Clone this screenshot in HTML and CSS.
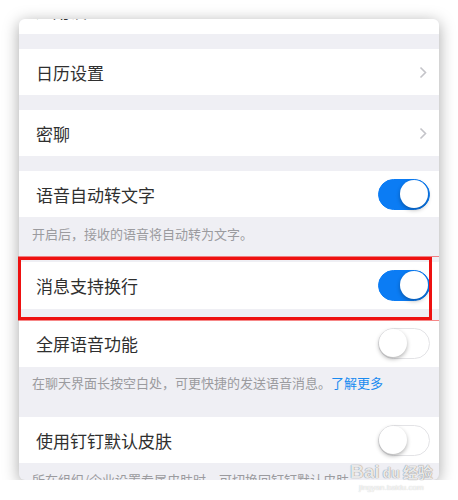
FILE: index.html
```html
<!DOCTYPE html>
<html lang="zh">
<head>
  <meta charset="UTF-8" />
  <title>设置</title>
  <link rel="stylesheet" href="styles.css">
</head>
<body>
  <div class="card">
    <div class="row row-cut"><span class="label">通用设置</span></div>
    <div class="gap"></div>

    <div class="row">
      <span class="label">日历设置</span>
      <svg class="chevron" width="8" height="13" viewBox="0 0 8 13"><polyline points="1.5,1.5 6.5,6.5 1.5,11.5" /></svg>
    </div>
    <div class="gap"></div>

    <div class="row">
      <span class="label">密聊</span>
      <svg class="chevron" width="8" height="13" viewBox="0 0 8 13"><polyline points="1.5,1.5 6.5,6.5 1.5,11.5" /></svg>
    </div>
    <div class="gap"></div>

    <div class="row">
      <span class="label">语音自动转文字</span>
      <span class="toggle on"><span class="knob"></span></span>
    </div>
    <div class="desc desc-first">开启后，接收的语音将自动转为文字。</div>

    <div class="row row-tall">
      <span class="label">消息支持换行</span>
      <span class="toggle on"><span class="knob"></span></span>
    </div>
    <div class="gap gap-small"></div>

    <div class="row row-tall">
      <span class="label">全屏语音功能</span>
      <span class="toggle"><span class="knob"></span></span>
    </div>
    <div class="desc desc-tall">在聊天界面长按空白处，可更快捷的发送语音消息。<a class="more" href="#">了解更多</a></div>

    <div class="row">
      <span class="label">使用钉钉默认皮肤</span>
      <span class="toggle"><span class="knob"></span></span>
    </div>
    <div class="desc">所在组织/企业设置专属皮肤时，可切换回钉钉默认皮肤</div>
  </div>

  <!-- 标注框 -->
  <div class="mark"></div>

  <div class="watermark">
    <span class="wm-logo">Bai<span class="wm-paw">du</span><span class="wm-cn">经验</span></span>
    <span class="wm-url">jingyan.baidu.com</span>
  </div>
</body>
</html>
```

FILE: styles.css
```css
body, html {
  margin: 0;
  padding: 0;
  background-color: #fff;
  font-family: "Noto Sans CJK SC", "Noto Sans", sans-serif;
}
.card {
  margin: 19px 0 0 19px;
  width: 420px;
  height: 461px;
  background-color: #efeff4;
  border-radius: 6px;
  overflow: hidden;
  box-shadow: 0 3px 16px rgba(0, 0, 0, 0.35);
}
.row {
  display: flex;
  align-items: center;
  justify-content: space-between;
  height: 46px;
  padding: 0 9px 0 17px;
  background-color: #fff;
}
.row-tall {
  height: 47px;
}
.row-cut {
  height: 15px;
  align-items: flex-end;
  overflow: hidden;
}
.row-cut .label {
  line-height: 17px;
  margin-bottom: 15px;
}
.label {
  font-size: 17px;
  color: #2f2f2f;
}
.chevron {
  margin-right: 3px;
}
.chevron polyline {
  fill: none;
  stroke: #c4c4c9;
  stroke-width: 1.6;
}
.gap {
  height: 15px;
}
.gap-small {
  height: 11px;
}
.desc {
  padding: 8px 13px 0;
  font-size: 13px;
  line-height: 18px;
  color: #9b9b9f;
  height: 32px;
}
.desc-first {
  height: 37px;
}
.desc-tall {
  padding-top: 7px;
  height: 43px;
}
.more {
  color: #1a8bf0;
  text-decoration: none;
}
.toggle {
  position: relative;
  width: 52px;
  height: 31px;
  border-radius: 16px;
  box-sizing: border-box;
  background-color: #fff;
  border: 1.5px solid #e3e3e6;
}
.toggle .knob {
  position: absolute;
  top: 0;
  left: 0;
  width: 28px;
  height: 28px;
  border-radius: 50%;
  background-color: #fff;
  box-shadow: 0 2px 4px rgba(0, 0, 0, 0.3);
}
.toggle.on {
  background-color: #0b7cf4;
  border-color: #0b7cf4;
}
.toggle.on .knob {
  left: 21px;
}
.mark {
  position: absolute;
  left: 18px;
  top: 257px;
  width: 408px;
  height: 57px;
  border: 3px solid #ee1111;
}
.mark::before {
  content: "";
  position: absolute;
  left: -3px;
  right: -10px;
  top: -4px;
  bottom: -4px;
  border-top: 1px solid rgba(238, 17, 17, 0.5);
  border-bottom: 1px solid rgba(238, 17, 17, 0.5);
}
.watermark {
  position: absolute;
  left: 350px;
  top: 462px;
  display: flex;
  flex-direction: column;
  align-items: center;
}
.wm-logo {
  font-family: "Liberation Sans", "Noto Sans CJK SC", sans-serif;
  font-size: 19px;
  line-height: 20px;
  font-weight: bold;
  color: rgba(255, 255, 255, 0.85);
  text-shadow: 0 0 1px rgba(0, 0, 0, 0.35), 0 0 1px rgba(0, 0, 0, 0.35);
}
.wm-paw {
  font-size: 14px;
  margin: 0 3px;
}
.wm-cn {
  font-size: 15px;
}
.wm-url {
  font-family: "Liberation Sans", sans-serif;
  font-size: 8px;
  color: rgba(255, 255, 255, 0.9);
  text-shadow: 0 0 1px rgba(0, 0, 0, 0.3);
}
```
